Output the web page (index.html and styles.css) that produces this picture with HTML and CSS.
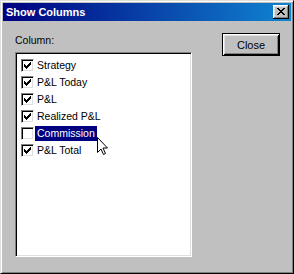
FILE: index.html
```html
<!DOCTYPE html>
<html lang="en">
<head>
  <meta charset="UTF-8" />
  <title>Show Columns</title>
  <link rel="stylesheet" href="styles.css">
</head>
<body>

  <div class="window">
    <!-- Title bar -->
    <div class="titlebar">
      <span class="title">Show Columns</span>
      <button class="title-close" aria-label="Close">
        <svg width="8" height="7" viewBox="0 0 8 7" shape-rendering="crispEdges">
          <path d="M0 0h2v1h-2zM6 0h2v1h-2zM1 1h2v1h-2zM5 1h2v1h-2zM2 2h4v1h-4zM3 3h2v1h-2zM2 4h4v1h-4zM1 5h2v1h-2zM5 5h2v1h-2zM0 6h2v1h-2zM6 6h2v1h-2z" fill="#000"/>
        </svg>
      </button>
    </div>

    <div class="content">
      <div class="left">
        <div class="label">Column:</div>
        <ul class="listbox">
          <li class="row"><span class="check on"></span><span class="text">Strategy</span></li>
          <li class="row"><span class="check on"></span><span class="text">P&amp;L Today</span></li>
          <li class="row"><span class="check on"></span><span class="text">P&amp;L</span></li>
          <li class="row"><span class="check on"></span><span class="text">Realized P&amp;L</span></li>
          <li class="row"><span class="check"></span><span class="text selected">Commission</span></li>
          <li class="row"><span class="check on"></span><span class="text">P&amp;L Total</span></li>
        </ul>
      </div>
      <div class="right">
        <button class="btn default">Close</button>
      </div>
    </div>

    <!-- mouse pointer -->
    <svg class="cursor" width="13" height="20" viewBox="0 0 13 20">
      <path d="M0.5 0.5V15.5L4 12L6.5 17.5L8.5 16.5L6 11H10.5Z" fill="#fff" stroke="#000" stroke-width="1" stroke-linejoin="miter"/>
    </svg>
  </div>

</body>
</html>
```

FILE: styles.css
```css
* { margin: 0; padding: 0; box-sizing: border-box; }
body { font-family: "Liberation Sans", Arial, sans-serif; background: #c0c0c0; }

.window {
  position: relative;
  width: 294px;
  height: 274px;
  background: #c0c0c0;
  border: 1px solid;
  border-color: #dfdfdf #000 #000 #dfdfdf;
  box-shadow: inset 1px 1px #fff, inset -1px -1px #808080;
  padding: 2px;
}

.titlebar {
  height: 18px;
  background: linear-gradient(90deg, #000080, #1084d0);
  display: flex;
  align-items: center;
  justify-content: space-between;
  padding: 0 2px 0 3px;
}

.title {
  color: #fff;
  font-weight: bold;
  font-size: 11px;
}

.title-close {
  width: 16px;
  height: 14px;
  border: none;
  background: #c0c0c0;
  box-shadow: inset -1px -1px #000, inset 1px 1px #fff, inset -2px -2px #808080, inset 2px 2px #dfdfdf;
  display: flex;
  align-items: center;
  justify-content: center;
  padding: 0 0 1px 0;
}

.title-close svg { display: block; }

.content {
  display: flex;
  justify-content: space-between;
  padding: 12px 11px 0 12px;
}

.label {
  margin-top: 1px;
  font-size: 10.5px;
  line-height: 13px;
  color: #000;
}

.listbox {
  list-style: none;
  margin-top: 5px;
  width: 177px;
  height: 205px;
  background: #fff;
  border: 1px solid;
  border-color: #808080 #fff #fff #808080;
  box-shadow: inset 1px 1px #000, inset -1px -1px #dfdfdf;
  padding: 4px 0 0 5px;
}

.row {
  display: flex;
  align-items: center;
  height: 17px;
  font-size: 10.5px;
}

.check {
  width: 13px;
  height: 13px;
  flex: none;
  background: #fff;
  border: 1px solid;
  border-color: #808080 #fff #fff #808080;
  box-shadow: inset 1px 1px #000, inset -1px -1px #dfdfdf;
  margin-right: 1px;
}

.check.on {
  background: #fff url("data:image/svg+xml,%3Csvg xmlns='http://www.w3.org/2000/svg' width='7' height='7' shape-rendering='crispEdges'%3E%3Cpath d='M0 2h1v3h-1zM1 3h1v3h-1zM2 4h1v3h-1zM3 3h1v3h-1zM4 2h1v3h-1zM5 1h1v3h-1zM6 0h1v3h-1z'/%3E%3C/svg%3E") no-repeat 2px 2px;
}

.text {
  padding: 0 2px;
  line-height: 15px;
  color: #000;
}

.text.selected {
  background: #000080;
  color: #fff;
}

.btn {
  width: 58px;
  height: 23px;
  font-family: "Liberation Sans", Arial, sans-serif;
  font-size: 11px;
  background: #c0c0c0;
  color: #000;
}

.btn.default {
  border: 1px solid #000;
  box-shadow: inset 1px 1px #fff, inset -1px -1px #000, inset 2px 2px #dfdfdf, inset -2px -2px #808080;
}

.cursor {
  position: absolute;
  left: 96px;
  top: 136px;
}
```
